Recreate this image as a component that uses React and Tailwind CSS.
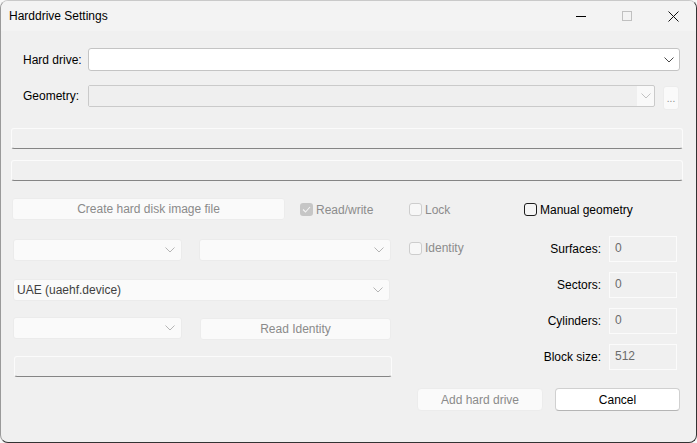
import React from "react";

function Chevron({ color = "#5a5a5a" }) {
  return (
    <svg width="10" height="6" viewBox="0 0 10 6" className="shrink-0">
      <path d="M0.5 0.5 L5 5 L9.5 0.5" fill="none" stroke={color} strokeWidth="1" />
    </svg>
  );
}

function DisabledCombo({ className = "", text }) {
  return (
    <div
      className={`flex items-center justify-between rounded-[3px] border border-[#ebebeb] bg-[#fafafa] pl-[3px] pr-[6px] ${className}`}
    >
      <span className="text-[#3f3f3f] truncate">{text}</span>
      <Chevron color="#b5b5b5" />
    </div>
  );
}

function Field({ className = "" }) {
  return (
    <div
      className={`rounded-[3px] border border-[#fbfbfb] border-b-[#858585] bg-[#f0f0f0] ${className}`}
    />
  );
}

function Box({ variant }) {
  if (variant === "checked")
    return (
      <div className="flex h-[13px] w-[13px] items-center justify-center rounded-[3px] bg-[#c6c6c6]">
        <svg width="9" height="7" viewBox="0 0 9 7">
          <path d="M1 3.5 L3.5 6 L8 1" fill="none" stroke="#f4f4f4" strokeWidth="1.1" />
        </svg>
      </div>
    );
  if (variant === "enabled")
    return <div className="h-[13px] w-[13px] rounded-[3px] border border-[#1c1c1c] bg-[#f5f5f5]" />;
  return <div className="h-[13px] w-[13px] rounded-[3px] border border-[#cdcdcd] bg-[#f7f7f7]" />;
}

function Check({ variant, label, className = "" }) {
  return (
    <div className={`flex items-center gap-[3px] ${className}`}>
      <Box variant={variant} />
      <span className={variant === "enabled" ? "text-black" : "text-[#8c8c8c]"}>{label}</span>
    </div>
  );
}

function GeoRow({ label, value }) {
  return (
    <div className="flex h-[26px] items-center justify-end">
      <span className="text-black">{label}</span>
      <div className="ml-[8px] h-[26px] w-[68px] border border-[#fbfbfb] bg-[#f0f0f0] pl-[5px] pt-[4px] text-[#6b6b6b]">
        {value}
      </div>
    </div>
  );
}

export default function App() {
  return (
    <div className="h-[443px] w-[697px] bg-[#f7f7f7] font-[family-name:'Liberation_Sans',Arial,sans-serif] text-[12px] leading-[14px]">
      <div className="flex h-[443px] w-[697px] flex-col overflow-hidden rounded-[8px] border border-t-[#c9c9c9] border-l-[#9a9a9a] border-r-[#333333] border-b-[#333333] bg-[#f0f0f0]">
        {/* title bar */}
        <div className="flex h-[30px] shrink-0 items-center justify-between bg-[#f3f3f3]">
          <span className="pl-[8px] text-black">Harddrive Settings</span>
          <div className="flex h-full">
            <div className="flex h-full w-[46px] items-center justify-center">
              <div className="h-px w-[10px] bg-black" />
            </div>
            <div className="flex h-full w-[46px] items-center justify-center">
              <div className="h-[10px] w-[10px] border border-[#c0c0c0]" />
            </div>
            <div className="flex h-full w-[46px] items-center justify-center">
              <svg width="11" height="11" viewBox="0 0 11 11">
                <path d="M0.5 0.5 L10.5 10.5 M10.5 0.5 L0.5 10.5" stroke="#111" strokeWidth="1" />
              </svg>
            </div>
          </div>
        </div>

        {/* body */}
        <div className="flex flex-1 flex-col">
          {/* Hard drive row */}
          <div className="mt-[17px] flex h-[23px] items-center">
            <span className="ml-[22px] w-[65px] text-black">Hard drive:</span>
            <div className="flex h-[23px] w-[592px] items-center justify-end rounded-[3px] border border-[#c4c4c4] bg-white pr-[5px]">
              <Chevron color="#4a4a4a" />
            </div>
          </div>

          {/* Geometry row */}
          <div className="mt-[14px] flex items-start">
            <span className="ml-[22px] flex h-[22px] w-[65px] items-center text-black">Geometry:</span>
            <div className="flex h-[22px] w-[567px] rounded-[2px] border border-[#cacaca] bg-[#f9f9f9]">
              <div className="h-full w-[548px] bg-[#efefef]" />
              <div className="flex flex-1 items-center justify-center">
                <Chevron color="#c2c2c2" />
              </div>
            </div>
            <div className="ml-[8px] mt-[1px] flex h-[24px] w-[16px] items-end justify-center rounded-[3px] border border-[#ececec] bg-[#fafafa] pb-[5px] text-[10px] leading-[10px] text-[#8c8c8c]">
              ...
            </div>
          </div>

          <Field className="ml-[10px] mt-[18px] h-[21px] w-[672px]" />
          <Field className="ml-[10px] mt-[11px] h-[21px] w-[672px]" />

          {/* Row A */}
          <div className="mt-[17px] flex h-[22px] items-center">
            <div className="ml-[11px] flex h-[22px] w-[273px] items-center justify-center rounded-[3px] border border-[#ececec] bg-[#fafafa] text-[#8a8a8a]">
              Create hard disk image file
            </div>
            <Check variant="checked" label="Read/write" className="ml-[15px] mt-[1px] w-[109px]" />
            <Check variant="disabled" label="Lock" className="mt-[1px] w-[115px]" />
            <Check variant="enabled" label="Manual geometry" className="mt-[1px]" />
          </div>

          {/* middle section */}
          <div className="mt-[16px] flex">
            <div className="ml-[12px] flex w-[379px] flex-col pt-[3px]">
              <div className="flex">
                <DisabledCombo className="h-[22px] w-[169px]" />
                <DisabledCombo className="ml-[17px] h-[22px] w-[192px]" />
              </div>
              <DisabledCombo className="mt-[18px] h-[22px] w-[377px]" text="UAE (uaehf.device)" />
              <div className="mt-[16px] flex items-start">
                <DisabledCombo className="h-[22px] w-[169px]" />
                <div className="ml-[18px] mt-px flex h-[22px] w-[191px] items-center justify-center rounded-[3px] border border-[#ececec] bg-[#fafafa] text-[#8a8a8a]">
                  Read Identity
                </div>
              </div>
              <Field className="ml-[1px] mt-[16px] h-[21px] w-[378px]" />
            </div>

            <div className="ml-[17px] w-[115px] pt-[5px]">
              <Check variant="disabled" label="Identity" />
            </div>

            <div className="flex w-[153px] flex-col gap-[10px]">
              <GeoRow label="Surfaces:" value="0" />
              <GeoRow label="Sectors:" value="0" />
              <GeoRow label="Cylinders:" value="0" />
              <GeoRow label="Block size:" value="512" />
            </div>
          </div>

          {/* bottom buttons */}
          <div className="ml-[416px] mt-[11px] flex">
            <div className="flex h-[23px] w-[126px] items-center justify-center rounded-[4px] border border-[#ececec] bg-[#fafafa] text-[#8a8a8a]">
              Add hard drive
            </div>
            <div className="ml-[12px] flex h-[23px] w-[125px] items-center justify-center rounded-[4px] border border-[#d0d0d0] border-b-[#b5b5b5] bg-white text-black">
              Cancel
            </div>
          </div>
        </div>
      </div>
    </div>
  );
}
